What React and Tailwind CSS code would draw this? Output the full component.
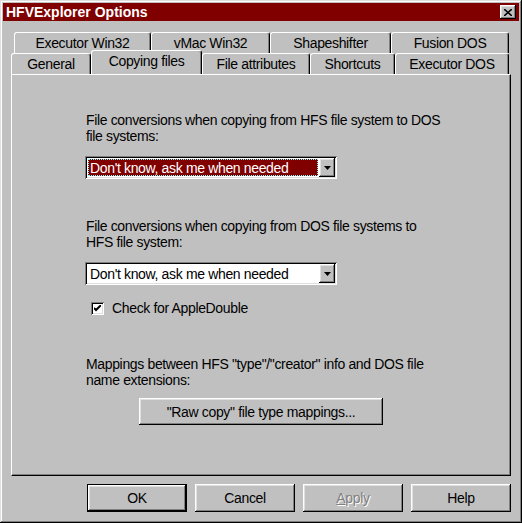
import React from "react";

const raised =
  "shadow-[inset_-1px_-1px_#000,inset_1px_1px_#fff,inset_-2px_-2px_#808080,inset_2px_2px_#dfdfdf]";
const sunken =
  "shadow-[inset_1px_1px_#808080,inset_-1px_-1px_#fff,inset_2px_2px_#000,inset_-2px_-2px_#dfdfdf]";

const backTabs = [
  { label: "Executor Win32", w: "w-[137px]" },
  { label: "vMac Win32", w: "w-[119px]" },
  { label: "Shapeshifter", w: "w-[121px]" },
  { label: "Fusion DOS", w: "w-[118px]" },
];

const frontTabs = [
  { label: "General", w: "w-[80px]" },
  { label: "Copying files", w: "w-[111px]", active: true },
  { label: "File attributes", w: "w-[108px]" },
  { label: "Shortcuts", w: "w-[85px]" },
  { label: "Executor DOS", w: "w-[114px]" },
];

function Tab({ label, w, active }) {
  return (
    <div
      className={`${w} flex items-center justify-center rounded-t-[3px] border-t border-l border-r border-t-white border-l-white border-r-black bg-[#c0c0c0] shadow-[inset_-1px_0_#808080] ${
        active ? "relative z-10 -mt-[2px] h-[24px] pb-[4px]" : "h-[21px]"
      }`}
    >
      {label}
    </div>
  );
}

function Combo({ selected }) {
  return (
    <div className={`flex h-[23px] w-[252px] items-center bg-white p-[2px] ${sunken}`}>
      <div className="flex h-full flex-1 items-center p-[1px]">
        {selected ? (
          <div className="flex h-full w-full items-center border border-dotted border-[#7fffff] bg-[#800000] pl-[1px] text-white">
            Don't know, ask me when needed
          </div>
        ) : (
          <div className="pl-[2px]">Don't know, ask me when needed</div>
        )}
      </div>
      <div className={`flex h-[19px] w-[16px] items-center justify-center bg-[#c0c0c0] ${raised}`}>
        <svg width="7" height="4" viewBox="0 0 7 4">
          <path d="M0 0h7L3.5 4z" fill="#000" />
        </svg>
      </div>
    </div>
  );
}

function Button({ children, isDefault, disabled, className = "" }) {
  return (
    <div
      className={`flex items-center justify-center bg-[#c0c0c0] ${
        isDefault ? "border border-black" : ""
      } ${raised} ${className}`}
    >
      <span className={disabled ? "text-[#808080] [text-shadow:1px_1px_#fff]" : ""}>{children}</span>
    </div>
  );
}

export default function App() {
  return (
    <div
      className="h-[523px] w-[522px] bg-[#c0c0c0] p-[3px] text-[14px] leading-[16px] tracking-[-0.35px] text-black shadow-[inset_-1px_-1px_#000,inset_1px_1px_#dfdfdf,inset_-2px_-2px_#808080,inset_2px_2px_#fff]"
      style={{ fontFamily: '"Liberation Sans", Arial, sans-serif' }}
    >
      {/* title bar */}
      <div className="flex h-[18px] items-center justify-between bg-[#800000] pl-[3px] pr-[3px]">
        <span className="font-bold tracking-normal text-white">HFVExplorer Options</span>
        <div className={`flex h-[14px] w-[16px] items-center justify-center bg-[#c0c0c0] ${raised}`}>
          <svg width="8" height="7" viewBox="0 0 8 7">
            <path d="M0 0L8 7M8 0L0 7" stroke="#000" strokeWidth="1.6" />
          </svg>
        </div>
      </div>

      {/* tabs */}
      <div className="mt-[11px] flex pl-[11px]">
        {backTabs.map((t) => (
          <Tab key={t.label} {...t} />
        ))}
      </div>
      <div className="flex h-[21px] items-end pl-[8px]">
        {frontTabs.map((t) => (
          <Tab key={t.label} {...t} />
        ))}
      </div>

      {/* panel */}
      <div className="ml-[8px] h-[402px] w-[500px] border-t border-l border-r border-b border-t-white border-l-white border-r-black border-b-black pl-[73px] pt-[37px] shadow-[inset_-1px_-1px_#808080]">
        <div className="pl-[1px]">
          File conversions when copying from HFS file system to DOS
          <br />
          file systems:
        </div>
        <div className="mt-[12px]">
          <Combo selected />
        </div>

        <div className="mt-[39px] pl-[1px]">
          File conversions when copying from DOS file systems to
          <br />
          HFS file system:
        </div>
        <div className="mt-[12px]">
          <Combo />
        </div>

        <div className="mt-[15px] flex items-center gap-[8px] pl-[6px]">
          <div className={`flex h-[13px] w-[13px] items-center justify-center bg-white ${sunken}`}>
            <svg width="7" height="7" viewBox="0 0 7 7">
              <path d="M0 3l2 2L7 0" stroke="#000" strokeWidth="2" fill="none" />
            </svg>
          </div>
          <span>Check for AppleDouble</span>
        </div>

        <div className="mt-[40px] pl-[1px]">
          Mappings between HFS "type"/"creator" info and DOS file
          <br />
          name extensions:
        </div>
        <Button className="ml-[54px] mt-[10px] h-[27px] w-[244px]">"Raw copy" file type mappings...</Button>
      </div>

      {/* buttons */}
      <div className="mt-[8px] flex justify-end gap-[8px] pr-[8px]">
        <Button isDefault className="h-[28px] w-[100px]">OK</Button>
        <Button className="h-[28px] w-[100px]">Cancel</Button>
        <Button disabled className="h-[28px] w-[100px]">
          <span className="underline">A</span>pply
        </Button>
        <Button className="h-[28px] w-[100px]">Help</Button>
      </div>
    </div>
  );
}
